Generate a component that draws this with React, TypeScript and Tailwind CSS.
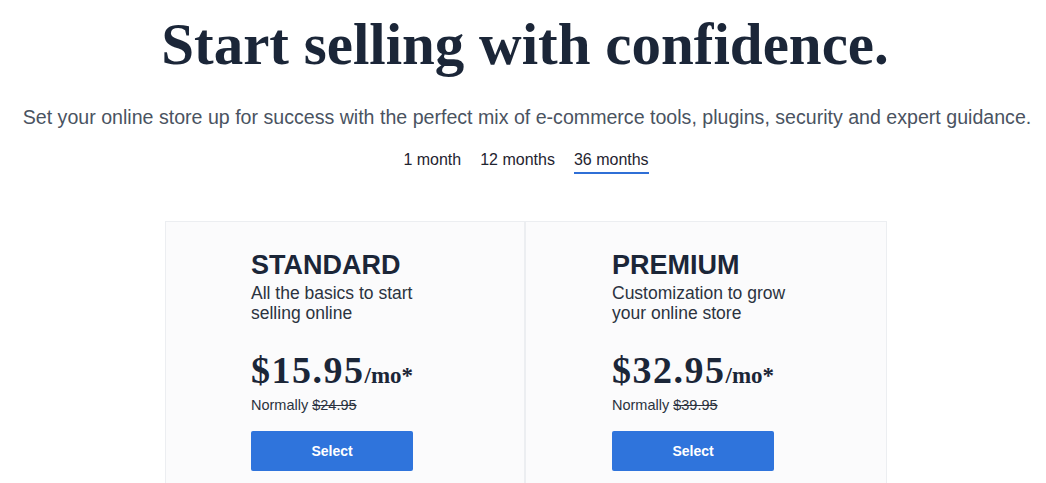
export default function App() {
  const plans = [
    {
      name: "STANDARD",
      desc: ["All the basics to start", "selling online"],
      price: "$15.95",
      normal: "$24.95",
    },
    {
      name: "PREMIUM",
      desc: ["Customization to grow", "your online store"],
      price: "$32.95",
      normal: "$39.95",
    },
  ];

  return (
    <div className="h-[483px] w-[1046px] overflow-hidden bg-white font-['Liberation_Sans',Arial,sans-serif] text-[#1e2a3b]">
      <h1 className="pt-[15px] pl-[4px] text-center font-['Liberation_Serif',serif] text-[59px] font-bold leading-[59px] text-[#1b2638]">
        Start selling with confidence.
      </h1>
      <p className="mt-[31px] pl-[8px] text-center text-[19.6px] leading-[24px] text-[#4a5361]">
        Set your online store up for success with the perfect mix of e-commerce tools, plugins, security and expert guidance.
      </p>

      <div className="mt-[21px] flex items-start justify-center gap-[19px] pl-[6px] text-[16px] leading-[20px] text-[#1f2430]">
        <button className="pb-[4px]">1 month</button>
        <button className="pb-[4px]">12 months</button>
        <button className="border-b-2 border-[#2f6fd6] pb-[2px]">36 months</button>
      </div>

      <div className="mx-auto mt-[47px] grid w-[722px] translate-x-[3px] grid-cols-2 border border-[#eceef1] bg-[#fbfbfc]">
        {plans.map((p, i) => (
          <div
            key={p.name}
            className={
              "pt-[28px] pb-[20px] " +
              (i === 0 ? "border-r-2 border-[#eceef1] pl-[85px]" : "pl-[86px]")
            }
          >
            <h2 className="text-[27px] font-bold leading-[30px] text-[#1b2638]">
              {p.name}
            </h2>
            <p className="mt-[3px] text-[17.5px] leading-[20px] text-[#2b3340]">
              {p.desc[0]}
              <br />
              {p.desc[1]}
            </p>
            <div className="mt-[27px] flex items-baseline font-['Liberation_Serif',serif] font-bold text-[#1b2638]">
              <span className="text-[38px] leading-[40px] tracking-[1.5px]">{p.price}</span>
              <span className="text-[23px] leading-[40px]">/mo*</span>
            </div>
            <p className="mt-0 text-[14.5px] leading-[18px] text-[#2b3340]">
              Normally <span className="line-through">{p.normal}</span>
            </p>
            <button className="mt-[17px] h-[40px] w-[162px] rounded-[2px] bg-[#2f74dc] text-[14px] font-bold text-white">
              Select
            </button>
          </div>
        ))}
      </div>
    </div>
  );
}
